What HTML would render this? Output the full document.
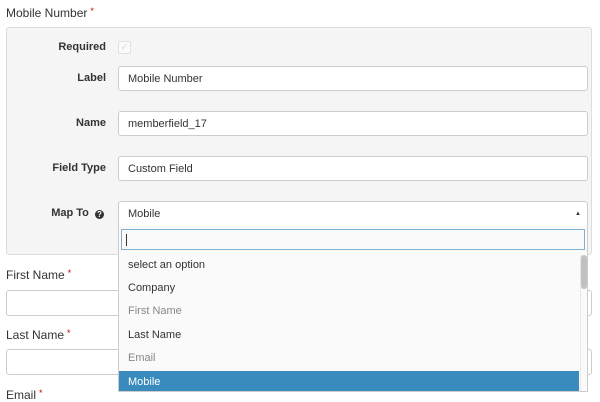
<!DOCTYPE html>
<html><head><style>
body{margin:0;width:600px;height:401px;background:#fff;font-family:"Liberation Sans",sans-serif;font-size:11px;color:#333;position:relative;overflow:hidden}
.a{position:absolute}
.req{color:#c00;font-size:9px;vertical-align:top;margin-left:3px}
.inp{position:absolute;background:#fff;border:1px solid #ccc;border-radius:3px;box-sizing:border-box;padding-left:9px;line-height:24px}
.lbl{position:absolute;right:494px;font-weight:bold;width:120px;text-align:right;white-space:nowrap}
.opt{position:absolute;left:9px}
</style></head><body>
<div class="a" style="left:6px;top:6px;font-size:12px">Mobile Number<span class="req">*</span></div>
<div class="a" style="left:6px;top:27px;width:586px;height:228px;background:#f5f5f5;border:1px solid #ddd;border-radius:3px;box-sizing:border-box"></div>
<div class="lbl" style="top:41px">Required</div>
<div class="a" style="left:118px;top:41px;width:11px;height:11px;border:1px solid #e0e0e0;border-radius:2px;background:#fafafa;color:#ddd;font-size:10px;line-height:11px;text-align:center">✓</div>
<div class="lbl" style="top:72px">Label</div>
<div class="inp" style="left:118px;top:66px;width:470px;height:25px">Mobile Number</div>
<div class="lbl" style="top:117px">Name</div>
<div class="inp" style="left:118px;top:111px;width:470px;height:25px">memberfield_17</div>
<div class="lbl" style="top:162px">Field Type</div>
<div class="inp" style="left:118px;top:156px;width:470px;height:25px">Custom Field</div>
<div class="lbl" style="top:207px;right:496px">Map To&nbsp; <span style="display:inline-block;width:9px;height:9px;border-radius:50%;background:#333;color:#fff;font-size:8px;line-height:9px;text-align:center;vertical-align:-1px">?</span></div>
<div class="inp" style="left:118px;top:201px;width:470px;height:26px;border-radius:3px 3px 0 0">Mobile<span style="position:absolute;right:6px;top:0;font-size:6px">▲</span></div>
<div class="a" style="left:6px;top:268px;font-size:12px">First Name<span class="req">*</span></div>
<div class="inp" style="left:6px;top:290px;width:200px;height:26px"></div>
<div class="inp" style="left:580px;top:290px;width:12px;height:26px"></div>
<div class="a" style="left:6px;top:328px;font-size:12px">Last Name<span class="req">*</span></div>
<div class="inp" style="left:6px;top:349px;width:200px;height:26px"></div>
<div class="inp" style="left:580px;top:349px;width:12px;height:26px"></div>
<div class="a" style="left:6px;top:388px;font-size:12px">Email<span class="req">*</span></div>
<div class="a" style="left:118px;top:226px;width:470px;height:166px;background:#fafafa;border:1px solid #ccc;border-top:none;box-sizing:border-box">
 <div class="a" style="left:2px;top:3px;width:464px;height:21px;border:1px solid #7fb2d2;background:#fafafa;box-sizing:border-box"><div class="a" style="left:4px;top:4px;width:1px;height:12px;background:#333"></div></div>
 <div class="opt" style="top:33px">select an option</div>
 <div class="opt" style="top:56px">Company</div>
 <div class="opt" style="top:79px;color:#888">First Name</div>
 <div class="opt" style="top:103px">Last Name</div>
 <div class="opt" style="top:126px;color:#888">Email</div>
 <div class="a" style="left:0;top:145px;width:460px;height:20px;background:#3a8bbd;color:#fff"><span style="position:absolute;left:9px;top:5px">Mobile</span></div>
 <div class="a" style="left:461px;top:29px;width:1px;height:136px;background:#e8e8e8"></div>
 <div class="a" style="left:462px;top:29px;width:6px;height:34px;background:#c1c1c1;border-radius:3px"></div>
</div>
</body></html>
